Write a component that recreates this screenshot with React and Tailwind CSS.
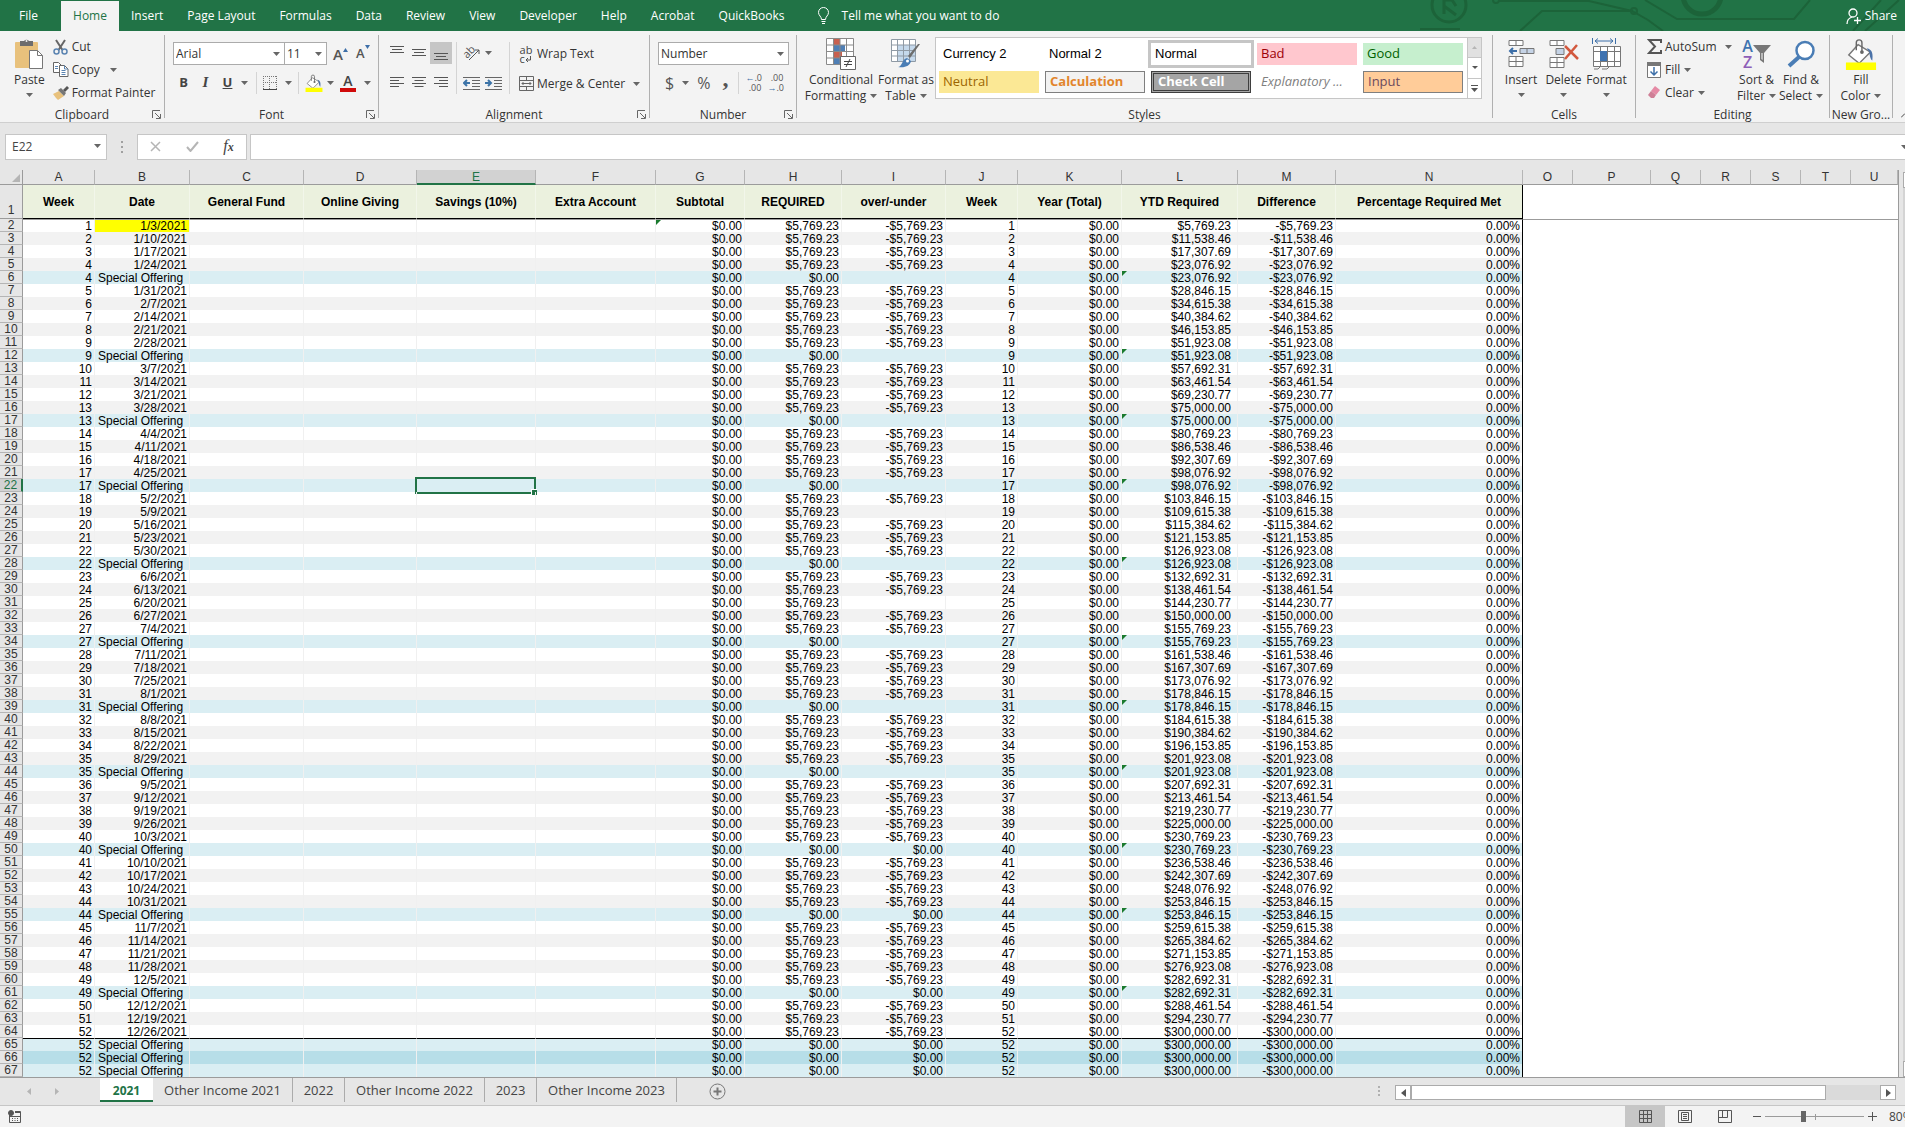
import { Fragment } from 'react'

const TABS = ['Insert', 'Page Layout', 'Formulas', 'Data', 'Review', 'View', 'Developer', 'Help', 'Acrobat', 'QuickBooks']

const STYLES = [
  { name: 'Currency 2', cls: "font-['Liberation_Sans',sans-serif] text-black" },
  { name: 'Normal 2', cls: "font-['Liberation_Sans',sans-serif] text-black" },
  { name: 'Normal', cls: "bg-white font-['Liberation_Sans',sans-serif] text-black outline-3 outline-[#c6c6c6]" },
  { name: 'Bad', cls: 'bg-[#ffc7ce] text-[#9c0006]' },
  { name: 'Good', cls: 'bg-[#c6efce] text-[#006100]' },
  { name: 'Neutral', cls: 'bg-[#fbe895] text-[#9c6500]' },
  { name: 'Calculation', cls: 'bg-[#f2f2f2] border border-[#7f7f7f] text-xs font-bold text-[#e2852c]' },
  { name: 'Check Cell', cls: 'bg-[#a5a5a5] border-3 border-double border-[#3f3f3f] text-xs font-bold text-white' },
  { name: 'Explanatory ...', cls: 'italic text-[#7f7f7f]' },
  { name: 'Input', cls: 'bg-[#ffcc99] border border-[#7f7f7f] text-[#6b4a5e]' },
]

const COLUMNS = [
  { id: 'A', title: 'Week', width: 'w-[72px]' },
  { id: 'B', title: 'Date', width: 'w-[95px]' },
  { id: 'C', title: 'General Fund', width: 'w-[114px]' },
  { id: 'D', title: 'Online Giving', width: 'w-[113px]' },
  { id: 'E', title: 'Savings (10%)', width: 'w-[119px]' },
  { id: 'F', title: 'Extra Account', width: 'w-[120px]' },
  { id: 'G', title: 'Subtotal', width: 'w-[89px]' },
  { id: 'H', title: 'REQUIRED', width: 'w-[97px]' },
  { id: 'I', title: 'over/-under', width: 'w-[104px]' },
  { id: 'J', title: 'Week', width: 'w-[72px]' },
  { id: 'K', title: 'Year (Total)', width: 'w-[104px]' },
  { id: 'L', title: 'YTD Required', width: 'w-[116px]' },
  { id: 'M', title: 'Difference', width: 'w-[98px]' },
  { id: 'N', title: 'Percentage Required Met', width: 'w-[187px]' },
  { id: 'O', width: 'w-[50px]' },
  { id: 'P', width: 'w-[78px]' },
  { id: 'Q', width: 'w-[50px]' },
  { id: 'R', width: 'w-[50px]' },
  { id: 'S', width: 'w-[50px]' },
  { id: 'T', width: 'w-[50px]' },
  { id: 'U', width: 'w-auto' },
]

const SPECIAL_WEEKS = [4, 9, 13, 17, 22, 27, 31, 35, 40, 44, 49]
const BLANK_WEEKS = [19, 25]

const money = (n) => '$' + n.toLocaleString('en-US', { minimumFractionDigits: 2, maximumFractionDigits: 2 })

function buildRows() {
  const rows = []
  let band = 0
  const special = (week, color, flagged) => {
    const ytd = money((300000 * week) / 52)
    rows.push({ week, special: true, date: 'Special Offering', required: '$0.00', over: week >= 40 ? '$0.00' : '', ytd, color, flagged })
    band = 0
  }
  for (let week = 1; week <= 52; week++) {
    const d = new Date(2021, 0, 3 + (week - 1) * 7)
    rows.push({
      week,
      date: `${d.getMonth() + 1}/${d.getDate()}/${d.getFullYear()}`,
      required: '$5,769.23',
      over: BLANK_WEEKS.includes(week) ? '' : '-$5,769.23',
      ytd: money((300000 * week) / 52),
      color: band % 2 ? 'bg-[#f2f2f2]' : 'bg-white',
    })
    band++
    if (SPECIAL_WEEKS.includes(week)) special(week, 'bg-[#daeef3]', true)
  }
  special(52, 'bg-[#daeef3]', false)
  special(52, 'bg-[#b7dee8]', false)
  special(52, 'bg-[#daeef3]', false)
  return rows
}

const ROWS = buildRows()

function Caret({ className = '' }) {
  return (
    <svg className={`shrink-0 ${className}`} width="7" height="4" viewBox="0 0 7 4" fill="#666" aria-hidden="true">
      <path d="M0 0h7L3.5 4z" />
    </svg>
  )
}

function Launcher({ label }) {
  return (
    <button aria-label={label} className="absolute right-[3px] bottom-[3px]">
      <svg width="9" height="9" viewBox="0 0 9 9" fill="none" stroke="#666">
        <path d="M.5 8V.5H8M3 3l5 5M8.500 4v4.500H4" />
      </svg>
    </button>
  )
}

function Group({ label, className = '', launcher, children }) {
  return (
    <>
      <section aria-label={label} className={`relative flex shrink-0 flex-col pt-1 ${className}`}>
        <div className="flex flex-1">{children}</div>
        <div className="h-4 text-center leading-[18px] text-[#333]">{label}</div>
        {launcher && <Launcher label={`${label} settings`} />}
      </section>
      <span className="my-1 w-px shrink-0 bg-[#b0b0b0]" />
    </>
  )
}

function Divider({ className = 'h-[22px]' }) {
  return <span className={`w-px shrink-0 bg-[#d4d4d4] ${className}`} />
}

function SmallButton({ icon, label, caret, caretGap = 'ml-1' }) {
  return (
    <button className="flex h-[23px] items-center whitespace-nowrap">
      <span className="mr-[3px] flex w-4 justify-center">{icon}</span>
      {label}
      {caret && <Caret className={caretGap} />}
    </button>
  )
}

// icon over one or two lines of text; the arrow goes under a single line
function BigButton({ icon, lines, caret = true, className = '' }) {
  return (
    <button className={`flex flex-col items-center whitespace-nowrap ${className}`}>
      <span className="flex h-[37px] items-center justify-center">{icon}</span>
      <span className="leading-4">{lines[0]}</span>
      {lines[1] ? (
        <span className="flex items-center gap-1 leading-4">
          {lines[1]}
          <Caret />
        </span>
      ) : (
        caret && <Caret className="mt-[5px]" />
      )}
    </button>
  )
}

function Combo({ label, value, className }) {
  return (
    <label className={`relative block h-[23px] border border-[#ababab] bg-white ${className}`}>
      <span className="sr-only">{label}</span>
      <select className="block h-full w-full appearance-none bg-transparent px-[2px] leading-5 text-[#333] outline-none">
        <option>{value}</option>
      </select>
      <Caret className="pointer-events-none absolute top-[9px] right-1" />
    </label>
  )
}

function Lines({ rows, align = 'left' }) {
  return (
    <svg width="14" height="14" viewBox="0 0 14 14" stroke="#555" aria-hidden="true">
      {rows.map(([y, w]) => {
        const x = align === 'left' ? 0 : align === 'right' ? 14 - w : (14 - w) / 2
        return <path key={y} d={`M${x} ${y + 0.5}h${w}`} />
      })}
    </svg>
  )
}

const SHORT_LONG = [[1, 14], [4, 9], [7, 14], [10, 9]]

function PasteIcon() {
  return (
    <svg width="30" height="32" viewBox="0 0 30 32">
      <rect x="1" y="4" width="23" height="26" rx="1" fill="#e8c17c" />
      <path d="M6 3h4a3 3 0 0 1 5 0h4v5H6z" fill="#6d6d6d" />
      <circle cx="12.500" cy="3" r="1" fill="#f3f3f3" />
      <path d="M15.500 12.500h8l5 5v13h-13z" fill="#fff" stroke="#777" />
      <path d="M23.500 12.500v5h5" fill="none" stroke="#777" />
    </svg>
  )
}

function CutIcon() {
  return (
    <svg width="15" height="16" viewBox="0 0 15 16" fill="none">
      <path d="M3 1l6.500 10M12 1L5.500 11" stroke="#666" strokeWidth="2" />
      <circle cx="3.500" cy="12.500" r="2.500" stroke="#5b84b1" strokeWidth="1.500" />
      <circle cx="11.500" cy="12.500" r="2.500" stroke="#5b84b1" strokeWidth="1.500" />
    </svg>
  )
}

function CopyIcon() {
  return (
    <svg width="16" height="15" viewBox="0 0 16 15" fill="#fff" stroke="#666">
      <path d="M.5.5h5l3 3v7h-8z" />
      <path d="M6.500 3.500h5l3.500 3.500v7.500H6.500z" />
      <path d="M2 4.500h3M2 6.500h3M8.500 8.500h4M8.500 10.500h4M8.500 12.500h4M11.500 3.500V7H15" fill="none" stroke="#5b84b1" />
    </svg>
  )
}

function PainterIcon() {
  return (
    <svg width="16" height="14" viewBox="0 0 16 14">
      <path d="M0 8l6-3 5 5-6 4-2-2z" fill="#e8c17c" />
      <path d="M5 4l3-2 5 5-2 3z" fill="#777" />
      <path d="M10 4l4-4 2 2-4 4z" fill="#555" />
    </svg>
  )
}

function BucketIcon({ size = 18, bar }) {
  return (
    <svg width={size} height={size} viewBox="0 0 32 34" fill="none">
      <path d="M13 7L3 18l11 9 12-12z" fill="#fff" stroke="#777" strokeWidth="1.500" />
      <path d="M11 13V5a3 3 0 0 1 6 0v10" stroke="#666" strokeWidth="1.500" />
      <circle cx="17" cy="15" r="2" fill="#666" />
      <path d="M22 11c6 1 7 6 6 13-2-1-3-6-3-9z" fill="#4a72a8" />
      <path d="M0 26h32v8H0z" fill={bar} />
    </svg>
  )
}

function BordersIcon() {
  return (
    <svg width="14" height="14" viewBox="0 0 14 14" stroke="#777" fill="none">
      <path d="M0 .5h14M0 6.500h14M.5 0v13M6.500 0v13M13.500 0v13" strokeDasharray="1 1" />
      <path d="M0 13.500h14" stroke="#444" />
    </svg>
  )
}

function IndentIcon({ flip }) {
  return (
    <svg width="17" height="14" viewBox="0 0 17 14" fill="none" stroke="#666">
      <path d="M0 1.500h17M9 4.500h8M9 7.500h8M9 10.500h8M0 13.500h17" />
      <path d={flip ? 'M0 7h6M3 4l3 3-3 3' : 'M7 7H1M4 4L1 7l3 3'} stroke="#3d74a8" strokeWidth="2" />
    </svg>
  )
}

function MergeIcon() {
  return (
    <svg width="15" height="15" viewBox="0 0 15 15" fill="none" stroke="#666">
      <path d="M.5.5h14v14H.5zM.5 4.500h14M.5 10.500h14M7.500.5v4M7.500 10.500v4" />
      <path d="M3 7.500h9M4.500 6L3 7.500 4.500 9M10.500 6L12 7.500 10.500 9" />
    </svg>
  )
}

function WrapIcon() {
  return (
    <span className="flex flex-col text-[11px] leading-[9px] text-[#444]">
      <span>ab</span>
      <span className="flex items-end">
        c
        <svg width="7" height="7" viewBox="0 0 7 7" fill="none" stroke="#555">
          <path d="M5.500 0v4H1M3 2L1 4l2 2" />
        </svg>
      </span>
    </span>
  )
}

function ConditionalIcon() {
  return (
    <svg width="30" height="32" viewBox="0 0 30 32" fill="none">
      <path d="M.5.5h27v26H.5z" fill="#fff" />
      <path d="M7 1h7v6H7zM7 14h9v6H7z" fill="#c8604f" />
      <path d="M7 7h12v7H7zM7 20h7v6H7z" fill="#4f7fb5" />
      <path d="M.5.5h27v26H.5zM.5 7h27M.5 13.500h27M.5 20h27M7.500.5v26M14 .5v26M20.500.5v26" stroke="#8a8a8a" />
      <path d="M14.500 18.500h15v13h-15z" fill="#fff" stroke="#666" />
      <path d="M18 23.500h8M18 26.500h8M24 21l-4 8" stroke="#444" />
    </svg>
  )
}

function FormatTableIcon() {
  return (
    <svg width="30" height="29" viewBox="0 0 30 29" fill="none">
      <path d="M.5.5h24v22H.5z" fill="#fff" />
      <path d="M7 6h17v16H7z" fill="#c5d9ec" />
      <path d="M.5.5h24v22H.5zM.5 6h24M.5 11.500h24M.5 17h24M6.500.5v22M12.500.5v22M18.500.5v22" stroke="#8f9aa5" />
      <path d="M29 5L19 19l-2-2L27 5z" fill="#6d6d6d" />
      <path d="M7 28c4 0 4-8 9-9l4 3c-1 5-6 7-13 6z" fill="#4a7db5" />
      <circle cx="16.500" cy="22" r="1.500" fill="#fff" />
    </svg>
  )
}

function InsertIcon() {
  return (
    <svg width="27" height="29" viewBox="0 0 27 29" fill="#fff" stroke="#777">
      <path d="M1 1.500h14v5H1zM8 1.500v5M1 17.500h14v10H1zM1 22.500h14M8 17.500v10" />
      <path d="M12 9.500h14v5H12zM19 9.500v5" fill="#c5d3e6" />
      <path d="M9 12H2M5 9l-3 3 3 3" fill="none" stroke="#3d6fa8" strokeWidth="2" />
    </svg>
  )
}

function DeleteIcon() {
  return (
    <svg width="30" height="29" viewBox="0 0 30 29" fill="#fff" stroke="#777">
      <path d="M1 1.500h14v5H1zM8 1.500v5M1 18.500h14v10H1zM1 23.500h14M8 18.500v10" />
      <path d="M7 9.500h8v6H7z" fill="#c5d3e6" />
      <path d="M16 7l13 13M28 6L16 20" fill="none" stroke="#d2583e" strokeWidth="2.500" />
    </svg>
  )
}

function FormatIcon() {
  return (
    <svg width="30" height="32" viewBox="0 0 30 32" fill="none" stroke="#777">
      <path d="M.5 0v6M23.500 0v6M3 3h18M6 .5L3 3l3 2.500M18 .5L21 3l-3 2.500" stroke="#3d6fa8" />
      <path d="M1.500 8.500h27v20h-27z" fill="#fff" />
      <path d="M1.500 13.500h27M1.500 23.500h27M8.500 8.500v20M15.500 8.500v20M22.500 8.500v20" />
      <path d="M8 13h7v10H8z" fill="#3f73b0" stroke="none" />
      <path d="M2 31h4l3-3M10 31h5l3-3" />
    </svg>
  )
}

function SortIcon() {
  return (
    <span className="flex items-center">
      <span className="flex flex-col text-base leading-4 font-semibold">
        <span className="text-[#3f73b0]">A</span>
        <span className="text-[#8e5fb8]">Z</span>
      </span>
      <svg width="18" height="18" viewBox="0 0 18 18" fill="#777">
        <path d="M0 0h18l-7 8v10l-4-3V8z" />
        <path d="M8.500 8v6l1 1V8z" fill="#fff" />
      </svg>
    </span>
  )
}

function FindIcon() {
  return (
    <svg width="28" height="28" viewBox="0 0 28 28" fill="none" stroke="#4a7db5">
      <circle cx="18" cy="10.500" r="8.500" fill="#fff" strokeWidth="2.500" />
      <path d="M12 17L2 26" strokeWidth="4" />
    </svg>
  )
}

function TitleArt() {
  return (
    <svg className="pointer-events-none absolute top-0 right-0" width="485" height="31" viewBox="0 0 485 31" fill="none" stroke="#1c6339" strokeWidth="2" aria-hidden="true">
      <circle cx="29" cy="5" r="17" strokeWidth="3" />
      <path d="M24 14V-2M24 6l12 9M24 0h8l4 6" strokeWidth="3" />
      <circle cx="76" cy="0" r="3" />
      <path d="M79 1h90l43 10 16 9 15 11M100 31l22-20h88M0 29h40M225 0l32 19h117l16-19M433 31l28-31M445 31l34-31" />
      <circle cx="214" cy="11" r="3" />
      <circle cx="282" cy="-5" r="19" strokeWidth="5" />
    </svg>
  )
}

function TitleBar() {
  return (
    <header className="relative flex h-[31px] shrink-0 items-end bg-[#217346] text-white">
      <TitleArt />
      <button className="h-[30px] w-[61px] pr-1 text-center">File</button>
      <nav className="flex h-[30px]">
        <button className="w-[58px] bg-[#f3f3f3] text-[#217346]">Home</button>
        {TABS.map((t) => (
          <button key={t} className="px-3 whitespace-nowrap">{t}</button>
        ))}
      </nav>
      <button className="ml-5 flex h-[30px] items-center gap-3 whitespace-nowrap">
        <svg width="13" height="18" viewBox="0 0 13 18" fill="none" stroke="#fff">
          <path d="M4.500 12.500c0-3-3-4-3-7a5 5 0 0 1 10 0c0 3-3 4-3 7zM4.500 14.500h4M5 16.500h3" />
        </svg>
        Tell me what you want to do
      </button>
      <button className="relative mr-2 ml-auto flex h-[30px] items-center gap-1">
        <svg width="15" height="17" viewBox="0 0 15 17" fill="none" stroke="#fff" strokeWidth="1.300">
          <circle cx="7" cy="5" r="4" />
          <path d="M1 16c0-4 2-6 5-7M8 12.500h7M11.500 9v7" />
        </svg>
        Share
      </button>
    </header>
  )
}

function Ribbon() {
  return (
    <div className="flex h-[92px] shrink-0 overflow-hidden border-b border-[#cfcfcf] bg-[#f3f3f3]">
      <Group label="Clipboard" className="w-[164px]" launcher>
        <BigButton icon={<PasteIcon />} lines={['Paste']} className="ml-[14px]" />
        <div className="ml-2 flex flex-col">
          <SmallButton icon={<CutIcon />} label="Cut" />
          <SmallButton icon={<CopyIcon />} label="Copy" caret caretGap="ml-[10px]" />
          <SmallButton icon={<PainterIcon />} label="Format Painter" />
        </div>
      </Group>

      <Group label="Font" className="w-[213px]" launcher>
        <div className="flex flex-col gap-[7px] pt-[7px] pl-2 text-[#444]">
          <div className="flex items-center">
            <Combo label="Font" value="Arial" className="w-[112px]" />
            <Combo label="Font size" value="11" className="-ml-px w-[43px]" />
            <button aria-label="Increase font size" className="ml-[6px] flex text-[15px] font-semibold text-[#555]">
              A
              <svg width="5" height="4" viewBox="0 0 5 4" fill="#3d6fa8" className="mt-1"><path d="M0 4h5L2.500 0z" /></svg>
            </button>
            <button aria-label="Decrease font size" className="ml-2 flex text-[13px] font-semibold text-[#555]">
              A
              <svg width="5" height="4" viewBox="0 0 5 4" fill="#3d6fa8"><path d="M0 0h5L2.500 4z" /></svg>
            </button>
          </div>
          <div className="flex h-[22px] items-center text-[13px]">
            <button aria-label="Bold" className="ml-[5px] w-[11px] font-bold">B</button>
            <button aria-label="Italic" className="ml-[11px] w-[11px] font-['Liberation_Serif',serif] text-[15px] font-bold italic">I</button>
            <button aria-label="Underline" className="ml-[11px] w-[11px] font-bold underline">U</button>
            <Caret className="ml-2" />
            <Divider className="ml-2 h-[22px]" />
            <button aria-label="Borders" className="ml-[6px] flex items-center gap-1"><BordersIcon /><Caret className="ml-1" /></button>
            <Divider className="ml-[6px] h-[22px]" />
            <button aria-label="Fill color" className="ml-[6px] flex items-center gap-1"><BucketIcon bar="#ffff00" /><Caret /></button>
            <button aria-label="Font color" className="ml-[6px] flex items-center gap-1">
              <span className="h-[18px] w-4 border-b-4 border-[#d00a0a] text-sm leading-[14px] font-semibold">A</span>
              <Caret className="ml-1" />
            </button>
          </div>
        </div>
      </Group>

      <Group label="Alignment" className="w-[270px]" launcher>
        <div className="flex items-start pt-[7px] pl-[11px]">
          <div className="flex flex-col gap-2">
            <div className="flex h-[22px] items-center">
              <button aria-label="Top align" className="w-[22px]"><Lines rows={[[0, 14], [3, 10], [6, 14]]} align="center" /></button>
              <button aria-label="Middle align" className="w-[18px]"><Lines rows={[[3, 14], [6, 10], [9, 14]]} align="center" /></button>
              <button aria-label="Bottom align" className="flex h-[22px] w-[22px] items-center justify-center bg-[#c6c6c6]"><Lines rows={[[7, 14], [10, 10], [13, 14]]} align="center" /></button>
            </div>
            <div className="flex h-[22px] items-center gap-2">
              <button aria-label="Align left"><Lines rows={SHORT_LONG} /></button>
              <button aria-label="Center"><Lines rows={SHORT_LONG} align="center" /></button>
              <button aria-label="Align right"><Lines rows={SHORT_LONG} align="right" /></button>
            </div>
          </div>
          <Divider className="ml-1 h-[52px]" />
          <div className="ml-[6px] flex w-[46px] flex-col gap-2">
            <button aria-label="Orientation" className="flex h-[22px] items-center gap-1">
              <svg width="18" height="18" viewBox="0 0 18 18" fill="none" stroke="#555">
                <text x="1" y="12" transform="rotate(-45 6 10)" fontSize="11" fill="#555" stroke="none">ab</text>
                <path d="M6 16L16 6M12 6h4v4" />
              </svg>
              <Caret />
            </button>
            <div className="flex h-[22px] items-center gap-[5px]">
              <button aria-label="Decrease indent"><IndentIcon /></button>
              <button aria-label="Increase indent"><IndentIcon flip /></button>
            </div>
          </div>
          <Divider className="h-[52px]" />
          <div className="ml-2 flex flex-col gap-[7px]">
            <SmallButton icon={<WrapIcon />} label="Wrap Text" />
            <SmallButton icon={<MergeIcon />} label="Merge & Center" caret caretGap="ml-2" />
          </div>
        </div>
      </Group>

      <Group label="Number" className="w-[146px]" launcher>
        <div className="flex flex-col gap-[7px] pt-[7px] pl-2">
          <Combo label="Number format" value="Number" className="w-[131px]" />
          <div className="flex h-[22px] items-center text-[#555]">
            <button aria-label="Accounting format" className="ml-[7px] flex items-center gap-2 text-base">$<Caret /></button>
            <button aria-label="Percent style" className="ml-2 text-base">%</button>
            <button aria-label="Comma style" className="ml-3 h-3 self-start font-['Liberation_Serif',serif] text-2xl leading-3 font-bold">,</button>
            <Divider className="ml-[10px] h-[22px]" />
            <button aria-label="Increase decimal" className="ml-[6px] w-4 text-right text-[9px] leading-[10px]"><span className="text-[#3d6fa8]">←</span>.0<br />.00</button>
            <button aria-label="Decrease decimal" className="ml-[6px] w-4 text-right text-[9px] leading-[10px]">.00<br /><span className="text-[#3d6fa8]">→</span>.0</button>
          </div>
        </div>
      </Group>

      <Group label="Styles" className="flex-1">
        <BigButton icon={<ConditionalIcon />} lines={['Conditional', 'Formatting']} className="ml-2 w-[72px]" />
        <BigButton icon={<FormatTableIcon />} lines={['Format as', 'Table']} className="w-[58px]" />
        <div className="mt-[2px] flex h-[62px] border border-[#c6c6c6] bg-white">
          <div className="grid grid-cols-5 grid-rows-2 content-start gap-[6px] py-[5px] pr-1 pl-[3px]">
            {STYLES.map((s) => (
              <button key={s.name} className={`flex h-[22px] w-[100px] items-center px-1 text-[13px] whitespace-nowrap ${s.cls}`}>{s.name}</button>
            ))}
          </div>
          <div className="flex w-[14px] flex-col border-l border-[#c6c6c6]">
            <button aria-label="Previous styles" className="flex flex-1 items-center justify-center bg-[#e1e1e1]">
              <svg width="5" height="3" viewBox="0 0 5 3" fill="#b5b5b5"><path d="M0 3h5L2.500 0z" /></svg>
            </button>
            <button aria-label="Next styles" className="flex flex-1 items-center justify-center border-y border-[#c6c6c6]">
              <svg width="6" height="3" viewBox="0 0 6 3" fill="#555"><path d="M0 0h6L3 3z" /></svg>
            </button>
            <button aria-label="More styles" className="flex flex-1 items-center justify-center">
              <svg width="7" height="7" viewBox="0 0 7 7" fill="#555"><path d="M0 0h7v1H0zM0 3h7L3.500 7z" /></svg>
            </button>
          </div>
        </div>
      </Group>

      <Group label="Cells" className="w-[142px]">
        <BigButton icon={<InsertIcon />} lines={['Insert']} className="ml-[7px] w-[42px]" />
        <BigButton icon={<DeleteIcon />} lines={['Delete']} className="w-[43px]" />
        <BigButton icon={<FormatIcon />} lines={['Format']} className="w-[43px]" />
      </Group>

      <Group label="Editing" className="w-[193px]">
        <div className="ml-[10px] flex w-[88px] flex-col">
          <SmallButton icon={<svg width="15" height="15" viewBox="0 0 15 15" fill="none" stroke="#555" strokeWidth="2"><path d="M14 4V1H2l6 6.500L2 14h12v-3" /></svg>} label="AutoSum" caret caretGap="ml-2" />
          <SmallButton
            icon={
              <svg width="14" height="16" viewBox="0 0 14 16" fill="none">
                <path d="M.5.5h13v15H.5z" fill="#fff" stroke="#777" />
                <path d="M0 0h14v4H0z" fill="#777" />
                <path d="M7 5v8M3.500 9.500L7 13l3.500-3.500" stroke="#3d6fa8" strokeWidth="1.500" />
              </svg>
            }
            label="Fill"
            caret
          />
          <SmallButton
            icon={
              <svg width="14" height="13" viewBox="0 0 14 13">
                <path d="M8 0l5 4-4 5-5-4z" fill="#e58aa5" />
                <path d="M4 5l5 4-2 3H4L1 9z" fill="#cf7f96" />
              </svg>
            }
            label="Clear"
            caret
          />
        </div>
        <BigButton icon={<SortIcon />} lines={['Sort &', 'Filter']} className="w-[45px]" />
        <BigButton icon={<FindIcon />} lines={['Find &', 'Select']} className="w-[44px]" />
      </Group>

      <Group label="New Gro..." className="w-[62px]">
        <BigButton icon={<BucketIcon size={32} bar="#ffff00" />} lines={['Fill', 'Color']} className="flex-1" />
      </Group>

      <button aria-label="Collapse ribbon" className="flex w-3 items-end justify-end pb-1">
        <svg width="4" height="5" viewBox="0 0 4 5" fill="none" stroke="#444"><path d="M0 4.500l4-4" /></svg>
      </button>
    </div>
  )
}

function FormulaBar() {
  return (
    <div className="flex h-[47px] shrink-0 items-center bg-[#e6e6e6] pl-[5px]">
      <div className="relative">
        <input aria-label="Name box" defaultValue="E22" className="block h-[26px] w-[102px] border border-[#c6c6c6] bg-white px-[6px] text-[#444] outline-none" />
        <Caret className="absolute top-[10px] right-[6px]" />
      </div>
      <svg className="mx-[14px]" width="2" height="12" viewBox="0 0 2 12" fill="#a0a0a0"><path d="M0 0h2v2H0zM0 5h2v2H0zM0 10h2v2H0z" /></svg>
      <div className="flex h-[26px] w-[110px] items-center justify-around border border-[#c6c6c6] bg-white">
        <button aria-label="Cancel"><svg width="11" height="11" viewBox="0 0 11 11" stroke="#b5b5b5" strokeWidth="1.500"><path d="M1 1l9 9M10 1l-9 9" /></svg></button>
        <button aria-label="Enter"><svg width="13" height="11" viewBox="0 0 13 11" fill="none" stroke="#b5b5b5" strokeWidth="2"><path d="M1 6l3.500 4L12 1" /></svg></button>
        <button aria-label="Insert function" className="font-['Liberation_Serif',serif] text-base leading-4 text-[#444] italic">f<span className="text-xs font-bold">x</span></button>
      </div>
      <input aria-label="Formula bar" className="ml-[3px] h-[26px] min-w-0 flex-1 border border-r-0 border-[#c6c6c6] bg-white px-2 outline-none" />
      <button aria-label="Expand formula bar" className="flex h-[26px] w-1 items-center overflow-hidden border-y border-[#c6c6c6] bg-white"><Caret /></button>
    </div>
  )
}

function Flag() {
  return <span className="absolute top-0 left-0 border-t-[5px] border-r-[5px] border-t-[#1a7a2e] border-r-transparent" />
}

function SheetRow({ row, number }) {
  const selected = number === 22
  const first = number === 2
  const line = first ? 'border-t border-t-[#9b9b9b]' : number === 65 ? 'border-t border-t-black' : ''
  const cell = `relative border-r border-r-[#f0f0f0] pr-[2px] text-right ${line}`
  return (
    <tr className={`h-[13px] ${row.color}`}>
      <th className={`border-r border-b border-b-[#b5b5b5] p-0 text-center font-normal ${selected ? 'border-r-2 border-r-[#217346] bg-[#d2d2d2] text-[#217346]' : 'border-r-[#9b9b9b] bg-[#e6e6e6] text-[#333]'}`}>
        {number}
      </th>
      <td className={cell}>{row.week}</td>
      <td className={`${cell} whitespace-nowrap ${row.special ? 'pl-[3px] !text-left' : ''} ${first ? 'bg-[#ffff00]' : ''}`}>{row.date}</td>
      <td className={cell} />
      <td className={cell} />
      <td className={cell}>
        {selected && (
          <span className="absolute -inset-y-[2px] -right-px -left-[2px] border-2 border-[#217346]">
            <span className="absolute -right-[3px] -bottom-[3px] h-[6px] w-[6px] border-t border-l border-white bg-[#217346]" />
          </span>
        )}
      </td>
      <td className={cell} />
      <td className={cell}>{first && <Flag />}$0.00</td>
      <td className={cell}>{row.required}</td>
      <td className={cell}>{row.over}</td>
      <td className={cell}>{row.week}</td>
      <td className={cell}>$0.00</td>
      <td className={`${cell} !pr-[6px]`}>{row.flagged && <Flag />}{row.ytd}</td>
      <td className={cell}>-{row.ytd}</td>
      <td className={`${cell} !border-r-black`}>0.00%</td>
      <td colSpan={7} className={`bg-white ${first ? line : ''}`} />
    </tr>
  )
}

function Sheet() {
  return (
    <main className="flex flex-1 overflow-hidden border-b border-[#9b9b9b] bg-[#e6e6e6] font-['Liberation_Sans',Arial,sans-serif] text-xs leading-3 text-black">
      <table className="w-full flex-1 table-fixed border-separate border-spacing-0 self-start border-r border-[#9b9b9b]">
        <colgroup>
          <col className="w-[23px]" />
          {COLUMNS.map((c) => (
            <col key={c.id} className={c.width} />
          ))}
        </colgroup>
        <thead>
          <tr className="h-[15px] bg-[#e6e6e6] text-[#333]">
            <th className="relative border-r border-b border-[#9b9b9b]">
              <svg className="absolute right-[2px] bottom-[2px]" width="8" height="8" viewBox="0 0 8 8" fill="#b5b5b5"><path d="M8 0v8H0z" /></svg>
            </th>
            {COLUMNS.map((c) => (
              <th key={c.id} className={`border-r border-b p-0 font-normal ${c.id === 'E' ? 'border-r-[#b5b5b5] border-b-2 border-b-[#217346] bg-[#d2d2d2] text-[#217346]' : 'border-r-[#b5b5b5] border-b-[#9b9b9b]'}`}>
                {c.id}
              </th>
            ))}
          </tr>
          <tr className="h-[34px] bg-[#ebf1de]">
            <th className="border-r border-b border-r-[#9b9b9b] border-b-[#9b9b9b] bg-[#e6e6e6] p-0 pb-[2px] align-bottom font-normal text-[#333]">1</th>
            {COLUMNS.map((c) => (
              <Fragment key={c.id}>
                {c.title && (
                  <th className={`border-r border-b border-b-black p-0 font-bold whitespace-nowrap ${c.id === 'N' ? 'border-r-black' : 'border-r-[#f2f6ea]'}`}>{c.title}</th>
                )}
              </Fragment>
            ))}
            <td colSpan={7} className="bg-white" />
          </tr>
        </thead>
        <tbody>
          {ROWS.map((row, i) => (
            <SheetRow key={i} row={row} number={i + 2} />
          ))}
        </tbody>
      </table>
      <div className="mt-[2px] ml-1 flex w-[2px] shrink-0 flex-col bg-[#d4d4d4]">
        <span className="h-4 border border-r-0 border-[#ababab] bg-white" />
        <span className="mt-auto h-4 border border-r-0 border-[#ababab] bg-white" />
      </div>
    </main>
  )
}

function SheetTabs() {
  return (
    <div className="flex h-[28px] shrink-0 border-b border-[#c6c6c6] bg-[#e6e6e6] text-[13px] text-[#444]">
      <div className="flex w-[100px] items-center gap-6 pl-[27px]">
        <button aria-label="Previous sheet"><svg width="4" height="7" viewBox="0 0 4 7" fill="#b5b5b5"><path d="M4 0v7L0 3.500z" /></svg></button>
        <button aria-label="Next sheet"><svg width="4" height="7" viewBox="0 0 4 7" fill="#b5b5b5"><path d="M0 0v7l4-3.500z" /></svg></button>
      </div>
      <button className="h-6 w-[53px] border-b-2 border-[#217346] bg-white pt-[3px] text-xs font-bold text-[#217346]">2021</button>
      {['Other Income 2021', '2022', 'Other Income 2022', '2023', 'Other Income 2023'].map((t) => (
        <button key={t} className={`h-6 border-r border-[#ababab] pt-[2px] whitespace-nowrap ${t.length > 4 ? 'w-[140px]' : 'w-[52px]'}`}>{t}</button>
      ))}
      <button aria-label="New sheet" className="ml-8 flex items-center">
        <svg width="17" height="17" viewBox="0 0 17 17" fill="none" stroke="#777"><circle cx="8.500" cy="8.500" r="7.500" /><path d="M8.500 4.500v8M4.500 8.500h8" strokeWidth="2" /></svg>
      </button>
      <svg className="mr-[15px] ml-auto self-center" width="2" height="11" viewBox="0 0 2 11" fill="#b0b0b0"><path d="M0 0h2v2H0zM0 4h2v2H0zM0 8h2v2H0z" /></svg>
      <div className="mt-[7px] mr-[9px] flex h-[15px] w-[501px] bg-[#dadada]">
        <button aria-label="Scroll left" className="flex w-4 items-center justify-center border border-[#ababab] bg-white"><svg width="5" height="8" viewBox="0 0 5 8" fill="#555"><path d="M5 0v8L0 4z" /></svg></button>
        <span className="w-[415px] border border-[#ababab] bg-white" />
        <button aria-label="Scroll right" className="ml-auto flex w-4 items-center justify-center border border-[#ababab] bg-white"><svg width="5" height="8" viewBox="0 0 5 8" fill="#555"><path d="M0 0v8l5-4z" /></svg></button>
      </div>
    </div>
  )
}

function StatusBar() {
  return (
    <footer className="flex h-[21px] shrink-0 items-center overflow-hidden bg-[#f3f3f3] pl-2 text-[#444]">
      <button aria-label="Record macro">
        <svg width="13" height="13" viewBox="0 0 13 13" fill="none" stroke="#555">
          <path d="M1.500 5v7.500h11v-11H7M1.500 6.500h11M4 8.500h1M6.500 8.500h1M9 8.500h1M4 10.500h1M6.500 10.500h1M9 10.500h1M7 2.500h6" />
          <circle cx="3" cy="3" r="2.500" fill="#555" />
        </svg>
      </button>
      <div className="ml-auto flex h-full">
        <button aria-label="Normal view" className="flex w-10 items-center justify-center bg-[#c6c6c6]">
          <svg width="13" height="13" viewBox="0 0 13 13" fill="none" stroke="#555"><path d="M.5.5h12v12H.5zM.5 4.500h12M.5 8.500h12M4.500.5v12M8.500.5v12" /></svg>
        </button>
        <button aria-label="Page layout view" className="flex w-10 items-center justify-center">
          <svg width="14" height="13" viewBox="0 0 14 13" fill="none" stroke="#555"><path d="M.5.5h13v12H.5zM3.500 2.500h7v8h-7zM5 4.500h4M5 6.500h4M5 8.500h4" /></svg>
        </button>
        <button aria-label="Page break view" className="flex w-10 items-center justify-center">
          <svg width="14" height="13" viewBox="0 0 14 13" fill="none" stroke="#555"><path d="M.5.5h13v12H.5zM4.500.5v7M9.500.5v7H.5" /></svg>
        </button>
      </div>
      <button aria-label="Zoom out" className="ml-1 flex w-4 justify-center"><svg width="8" height="9" viewBox="0 0 8 9" stroke="#555"><path d="M0 4.500h8" /></svg></button>
      <div className="relative flex h-full w-[99px] items-center">
        <span className="absolute top-[8px] left-[50px] h-[6px] w-px bg-[#9b9b9b]" />
        <input
          type="range"
          aria-label="Zoom"
          defaultValue="38"
          className="relative h-3 w-full appearance-none bg-transparent [&::-webkit-slider-runnable-track]:h-px [&::-webkit-slider-runnable-track]:bg-[#9b9b9b] [&::-webkit-slider-thumb]:-mt-[5px] [&::-webkit-slider-thumb]:h-[11px] [&::-webkit-slider-thumb]:w-[5px] [&::-webkit-slider-thumb]:appearance-none [&::-webkit-slider-thumb]:bg-[#666]"
        />
      </div>
      <button aria-label="Zoom in" className="mx-1 flex w-[9px] justify-center"><svg width="9" height="9" viewBox="0 0 9 9" stroke="#555"><path d="M0 4.500h9M4.500 0v9" /></svg></button>
      <button aria-label="Zoom level" className="ml-2 w-4 overflow-hidden text-left whitespace-nowrap">80%</button>
    </footer>
  )
}

export default function App() {
  return (
    <div className="flex min-h-screen w-full flex-col overflow-hidden bg-[#e6e6e6] font-['Open_Sans','Segoe_UI',sans-serif] text-xs text-[#333]">
      <TitleBar />
      <Ribbon />
      <FormulaBar />
      <Sheet />
      <SheetTabs />
      <StatusBar />
    </div>
  )
}
